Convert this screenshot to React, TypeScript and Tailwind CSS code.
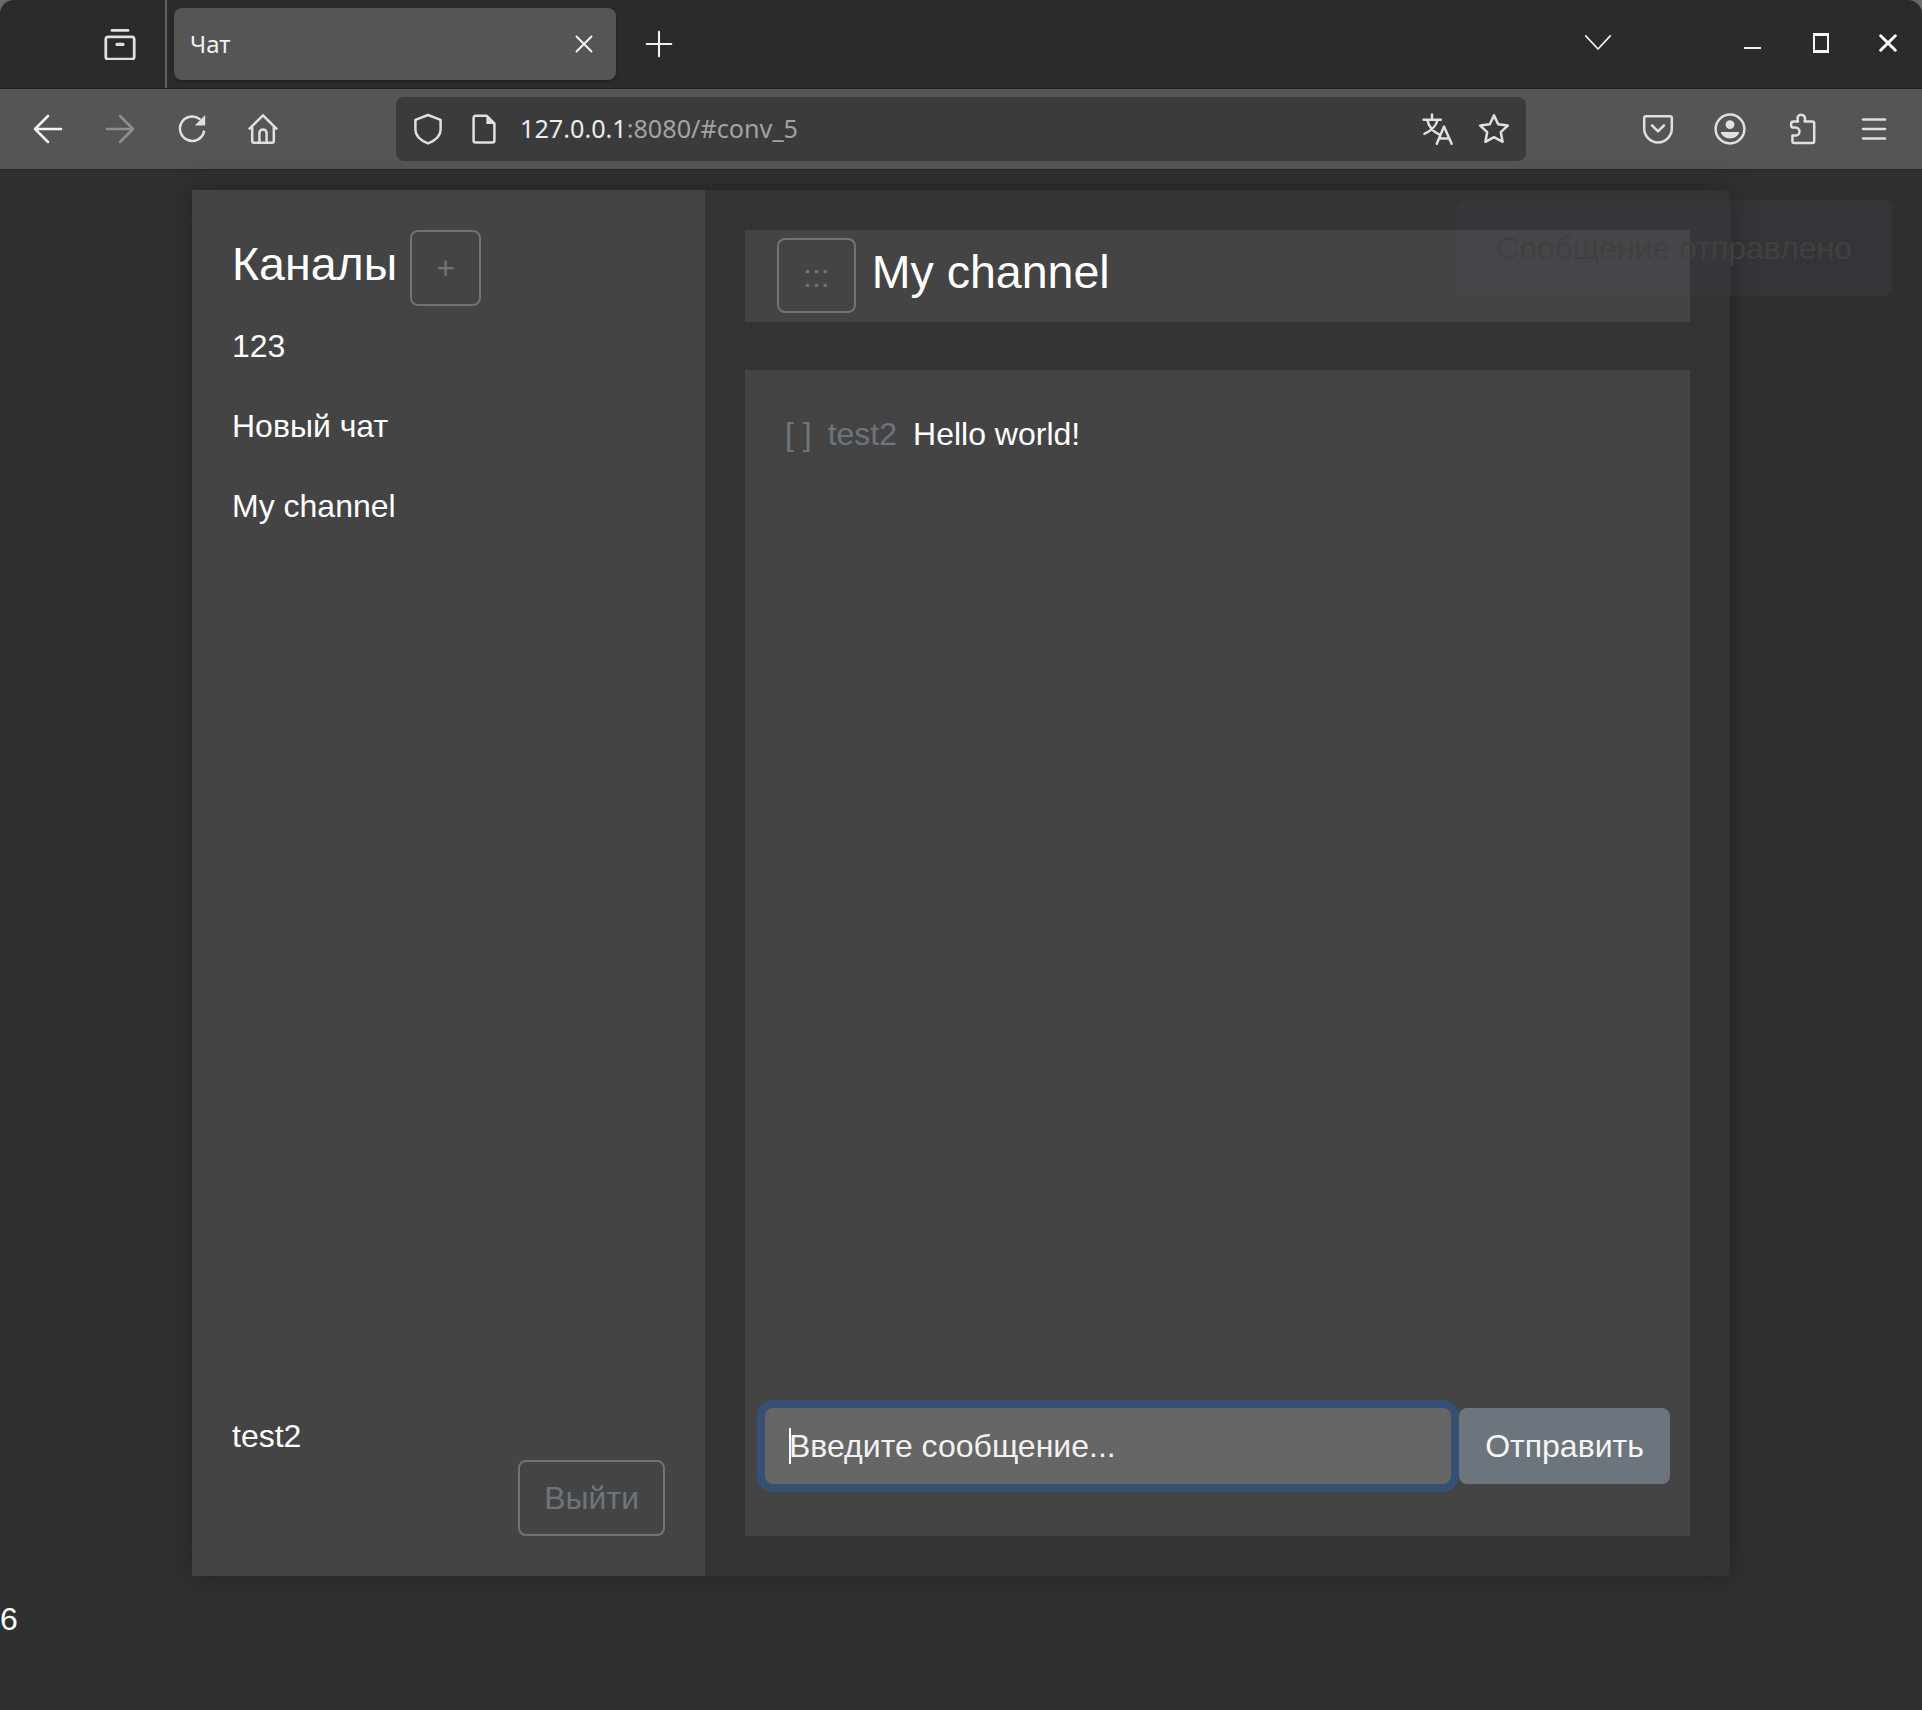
import React from "react";

const sans = "font-['Liberation_Sans',Arial,sans-serif]";

function Ico({ x = 32, c = "#e0e0e0", w = 1.25, children, className = "" }: { x?: number; c?: string; w?: number; children: React.ReactNode; className?: string }) {
  return (
    <svg width={x} height={x} viewBox="0 0 16 16" fill="none" stroke={c} strokeWidth={w} strokeLinecap="round" strokeLinejoin="round" className={className}>
      {children}
    </svg>
  );
}

function ToolSlot({ w, children }: { w: string; children: React.ReactNode }) {
  return <div className={`flex justify-center items-center shrink-0 ${w}`}>{children}</div>;
}

function TabStrip() {
  return (
    <div className="bg-[#6a6a6a]">
      <div className="h-[88px] bg-[#2b2b2b] rounded-t-[14px] flex items-center relative">
        <div className="w-[165px] h-full flex items-center justify-end pr-[29px]">
          <Ico>
            <path d="M4 1.200h8" strokeWidth={1.4} />
            <rect x="0.9" y="4.4" width="14.2" height="11.2" rx="1.2" strokeWidth={1.4} />
            <path d="M6.500 8.200h3" strokeWidth={1.6} />
          </Ico>
        </div>
        <div className="w-[2px] h-full bg-[#5f5f5f]" />
        <div className="ml-[7px] w-[442px] h-[72px] rounded-[8px] bg-[#555555] flex items-center justify-between pl-[16px] pr-[22px] shadow-[0_1px_3px_rgba(0,0,0,0.3)]">
          <span className="font-['Noto_Sans',sans-serif] text-[24px] text-[#f0f0f0]">Чат</span>
          <Ico x={20} c="#f0f0f0" w={1.6}><path d="M2 2l12 12M14 2L2 14" /></Ico>
        </div>
        <div className="ml-[29px]">
          <Ico x={28} c="#f0f0f0" w={1.2}><path d="M8 1v14M1 8h14" /></Ico>
        </div>
        <div className="ml-auto flex items-center">
          <div className="mr-[132px] -mt-[4px]">
            <Ico x={28} c="#f0f0f0" w={1}><path d="M1 4.500l7 7.500 7-7.500" /></Ico>
          </div>
          <div className="w-[17px] h-[2px] bg-[#f0f0f0] mt-[8px] mr-[52px]" />
          <div className="w-[16px] h-[20px] border-2 border-[#f5f5f5] border-t-[3px] border-b-[3px] -mt-[2px] mr-[50px]" />
          <div className="mr-[25px] -mt-[2px]">
            <Ico x={18} c="#ffffff" w={2.6}><path d="M1.500 1.500l13 13M14.500 1.500l-13 13" /></Ico>
          </div>
        </div>
      </div>
    </div>
  );
}

function Toolbar() {
  return (
    <div className="h-[82px] bg-[#555555] border-t border-[#1e1e1e] border-b border-b-[#262626] flex items-center">
      <div className="flex w-[396px] pl-[12px]">
        <ToolSlot w="w-[72px]">
          <Ico c="#f5f5f5"><path d="M1.500 8h13M8 1.500L1.500 8 8 14.500" /></Ico>
        </ToolSlot>
        <ToolSlot w="w-[72px]">
          <Ico c="#8f8f8f"><path d="M1.500 8h13M8 1.500L14.500 8 8 14.500" /></Ico>
        </ToolSlot>
        <ToolSlot w="w-[71px]">
          <Ico>
            <path d="M14 9.300A6.100 6.100 0 1 1 11.800 3" />
            <path d="M14.600 1v5.200H9.400z" fill="#e0e0e0" stroke="none" />
          </Ico>
        </ToolSlot>
        <ToolSlot w="w-[71px]">
          <Ico>
            <path d="M1.300 7.800L8 1.200l6.700 6.600M2.600 6.800V14a.9.9 0 0 0 .9.9h9a.9.9 0 0 0 .9-.9V6.800" />
            <path d="M6.200 14.800V10a1.800 1.800 0 0 1 3.600 0v4.800" />
          </Ico>
        </ToolSlot>
      </div>
      <div className="w-[1130px] h-[64px] rounded-[8px] bg-[#3b3b3b] flex items-center shrink-0">
        <div className="ml-[16px] w-[32px] flex justify-center">
          <Ico><path d="M8 1L14.300 3.400V8.400C14.300 11.400 11.600 13.800 8 15.200 4.400 13.800 1.700 11.400 1.700 8.400V3.400z" /></Ico>
        </div>
        <div className="ml-[24px] w-[32px] flex justify-center">
          <Ico>
            <path d="M3.800 1.400H9.400L13.200 5.200V13.700a1 1 0 0 1-1 1H3.800a1 1 0 0 1-1-1V2.400a1 1 0 0 1 1-1z" />
            <path d="M9.200 1.600v3.900h3.900z" fill="#e0e0e0" stroke="none" />
          </Ico>
        </div>
        <div className="ml-[20px] font-['Noto_Sans',sans-serif] text-[25.2px] text-[#ececec] whitespace-nowrap">
          127.0.0.1<span className="text-[#a3a3a3]">:8080/#conv_5</span>
        </div>
        <div className="ml-auto mr-[16px] flex items-center gap-[24px]">
          <Ico>
            <path d="M0.800 3.400h8.600M5 0.800v2.600M2.600 3.400c.7 3.200 2.800 6 6.200 7.400M7.800 3.400c-.6 2.700-3 5.600-6.600 7" />
            <path d="M7.400 15.400L11 6.800l3.800 8.600M8.600 12.800h5" />
          </Ico>
          <Ico><path d="M8 1.200l2.100 4.400 4.800.7-3.500 3.300.9 4.800L8 12.100l-4.300 2.300.9-4.800L1.100 6.300l4.800-.7z" /></Ico>
        </div>
      </div>
      <div className="flex-1 flex pl-[96px]">
        <ToolSlot w="w-[72px]">
          <Ico>
            <path d="M2 1.600h12a.9.9 0 0 1 .9.9v5.300a6.900 6.900 0 0 1-13.800 0V2.500a.9.9 0 0 1 .9-.9z" />
            <path d="M5 6.200l3 3 3-3" />
          </Ico>
        </ToolSlot>
        <ToolSlot w="w-[72px]">
          <Ico>
            <circle cx="8" cy="8" r="7.2" />
            <circle cx="8" cy="5.800" r="2.200" fill="#e0e0e0" stroke="none" />
            <path d="M3.400 9.500h9.200c-.4 2-2.400 3.200-4.600 3.200S3.800 11.500 3.400 9.500z" fill="#e0e0e0" stroke="none" />
          </Ico>
        </ToolSlot>
        <ToolSlot w="w-[72px]">
          <Ico>
            <path d="M7.600 0.900c1.300 0 2 1 1.900 2.200L9.300 4.200h3.800a1 1 0 0 1 1 1V14a1 1 0 0 1-1 1H4.200a1 1 0 0 1-1-1V11.300h1.500a2 2 0 0 0 0-4.100H3.200A.6.6 0 0 1 2.600 6.600V5.200a1 1 0 0 1 1-1H6L5.800 3.100C5.600 1.900 6.300.9 7.600.9z" />
          </Ico>
        </ToolSlot>
        <ToolSlot w="w-[72px]">
          <Ico><path d="M2.500 3.200h11M2.500 8h11M2.500 12.800h11" /></Ico>
        </ToolSlot>
      </div>
    </div>
  );
}

function Btn({ children, className = "" }: { children: React.ReactNode; className?: string }) {
  return (
    <button className={`h-[76px] px-[24px] rounded-[8px] border-2 border-[#6c757d] text-[#6c757d] text-[32px] leading-[48px] ${className}`}>
      {children}
    </button>
  );
}

function Sidebar() {
  return (
    <aside className="w-[513px] shrink-0 bg-[#444444] p-10 flex flex-col">
      <div className="flex items-start gap-[13px] mb-[16px]">
        <h2 className="text-[46.56px] leading-[68px] text-white">Каналы</h2>
        <Btn>+</Btn>
      </div>
      {["123", "Новый чат", "My channel"].map((n) => (
        <div key={n} className="h-12 mb-8 text-[32px] leading-[48px] text-white">{n}</div>
      ))}
      <div className="mt-auto text-[32px] leading-[48px] text-white">test2</div>
      <Btn className="self-end">Выйти</Btn>
    </aside>
  );
}

function Chat() {
  return (
    <main className="flex-1 bg-[#333333] p-10 flex flex-col gap-12">
      <div className="h-[92px] bg-[#444444] px-8 pt-2 flex items-start gap-[16px]">
        <Btn className="!h-[75px] !px-[24px]">:::</Btn>
        <h3 className="text-[46.56px] leading-[68px] text-white">My channel</h3>
      </div>
      <div className="flex-1 bg-[#444444] flex flex-col px-5 pb-[52px]">
        <div className="pt-10 px-5 flex text-[32px] leading-[48px]">
          <span className="text-[#6c757d]">[ ]</span>
          <span className="ml-4 text-[#6c757d]">test2</span>
          <span className="ml-4 text-white">Hello world!</span>
        </div>
        <div className="mt-auto flex gap-2">
          <div className="relative">
            <input
              placeholder="Введите сообщение..."
              className="block w-[686px] h-[76px] rounded-[8px] bg-[#666666] px-[24px] text-[32px] text-white placeholder:text-[#f2f2f2] placeholder:opacity-100 outline-none shadow-[0_0_0_8px_#375174]"
            />
            <div className="absolute left-[24px] top-[20px] w-[2px] h-[36px] bg-white" />
          </div>
          <button className="flex-1 h-[76px] rounded-[8px] bg-[#6c757d] text-[32px] text-[#f5f5f5]">Отправить</button>
        </div>
      </div>
    </main>
  );
}

export default function App() {
  return (
    <div className={`relative h-[1710px] bg-[#303030] overflow-hidden ${sans}`}>
      <TabStrip />
      <Toolbar />
      <div className="pt-[20px] pl-[192px]">
        <div className="w-[1538px] h-[1386px] flex shadow-[0_0_28px_rgba(0,0,0,0.3)]">
          <Sidebar />
          <Chat />
        </div>
      </div>
      <div className="mt-[19px] text-[32px] leading-[48px] text-white">6</div>
      <div className="absolute left-[1456px] top-[200px] w-[436px] h-[96px] rounded-[8px] bg-[rgba(84,90,125,0.12)] flex items-start pt-[24px] justify-center text-[32px] leading-[48px] text-[#3f413f]">
        Сообщение отправлено
      </div>
    </div>
  );
}
